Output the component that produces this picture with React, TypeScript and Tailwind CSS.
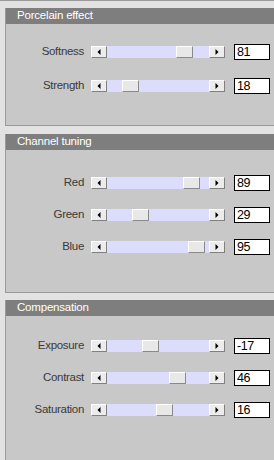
import React from "react";

const FONT = { fontFamily: '"Liberation Sans", Arial, sans-serif' };

function Arrow({ dir }: { dir: "l" | "r" }) {
  return (
    <svg width="4" height="6" viewBox="0 0 4 6" className="block">
      {dir === "l" ? <polygon points="3.5,0 3.5,6 0.5,3" fill="#000" /> : <polygon points="0.5,0 0.5,6 3.5,3" fill="#000" />}
    </svg>
  );
}

function Btn({ dir }: { dir: "l" | "r" }) {
  return (
    <div className="w-[16px] h-[12px] bg-[#ececec] border-t border-l border-t-white border-l-white border-b border-r border-b-[#808080] border-r-[#808080] flex items-center justify-center shrink-0">
      <Arrow dir={dir} />
    </div>
  );
}

function Row({ label, value, min, max, h }: { label: string; value: number; min: number; max: number; h: string }) {
  const trackW = 102;
  const thumbW = 17;
  const left = ((value - min) / (max - min)) * (trackW - thumbW);
  return (
    <div className={`flex items-center ${h}`}>
      <div className="w-[78px] text-right text-[11.5px] tracking-[-0.3px] text-[#3a3a3a] leading-none" style={FONT}>{label}</div>
      <div className="ml-[7px] flex items-center">
        <Btn dir="l" />
        <div className="relative w-[102px] h-[12px] bg-[#dcdcfc]">
          <div
            className="absolute top-0 h-[12px] w-[17px] bg-[#e8e8e8] border-t border-l border-t-white border-l-white border-b border-r border-b-[#8a8a8a] border-r-[#8a8a8a]"
            style={{ left }}
          />
        </div>
        <Btn dir="r" />
      </div>
      <div className="ml-[9px] w-[36px] h-[16px] bg-white border border-black flex items-center pl-[2px] text-[12.5px] tracking-[-0.4px] text-black leading-none" style={FONT}>
        {value}
      </div>
    </div>
  );
}

function Header({ title }: { title: string }) {
  return (
    <div className="h-[16px] bg-[#7e7e7e] text-white text-[11.5px] tracking-[-0.2px] leading-none flex items-center pl-[11px]" style={FONT}>
      {title}
    </div>
  );
}

export default function App() {
  return (
    <div className="w-[274px] h-[460px] bg-[#e2e2e2] overflow-hidden flex flex-col">
      <div className="h-px bg-[#9a9a9a] shrink-0" />
      <div className="pl-[5px] pt-[7px] shrink-0">
        <div className="border-l border-b border-[#9a9a9a]">
          <Header title="Porcelain effect" />
          <div className="bg-[#c8c8c8] h-[101px] pt-[11px]">
            <Row label="Softness" value={81} min={0} max={100} h="h-[34px]" />
            <Row label="Strength" value={18} min={0} max={100} h="h-[34px]" />
          </div>
        </div>
      </div>
      <div className="pl-[5px] pt-[8px] shrink-0">
        <div className="border-l border-b border-[#9a9a9a]">
          <Header title="Channel tuning" />
          <div className="bg-[#c8c8c8] h-[142px] pt-[17px]">
            <Row label="Red" value={89} min={0} max={100} h="h-[32px]" />
            <Row label="Green" value={29} min={0} max={100} h="h-[32px]" />
            <Row label="Blue" value={95} min={0} max={100} h="h-[32px]" />
          </div>
        </div>
      </div>
      <div className="pl-[5px] pt-[7px] flex-1 flex flex-col">
        <div className="border-l border-[#9a9a9a] flex-1 flex flex-col">
          <Header title="Compensation" />
          <div className="bg-[#c8c8c8] flex-1 pt-[14px]">
            <Row label="Exposure" value={-17} min={-100} max={100} h="h-[32px]" />
            <Row label="Contrast" value={46} min={-100} max={100} h="h-[32px]" />
            <Row label="Saturation" value={16} min={-100} max={100} h="h-[32px]" />
          </div>
        </div>
      </div>
    </div>
  );
}
